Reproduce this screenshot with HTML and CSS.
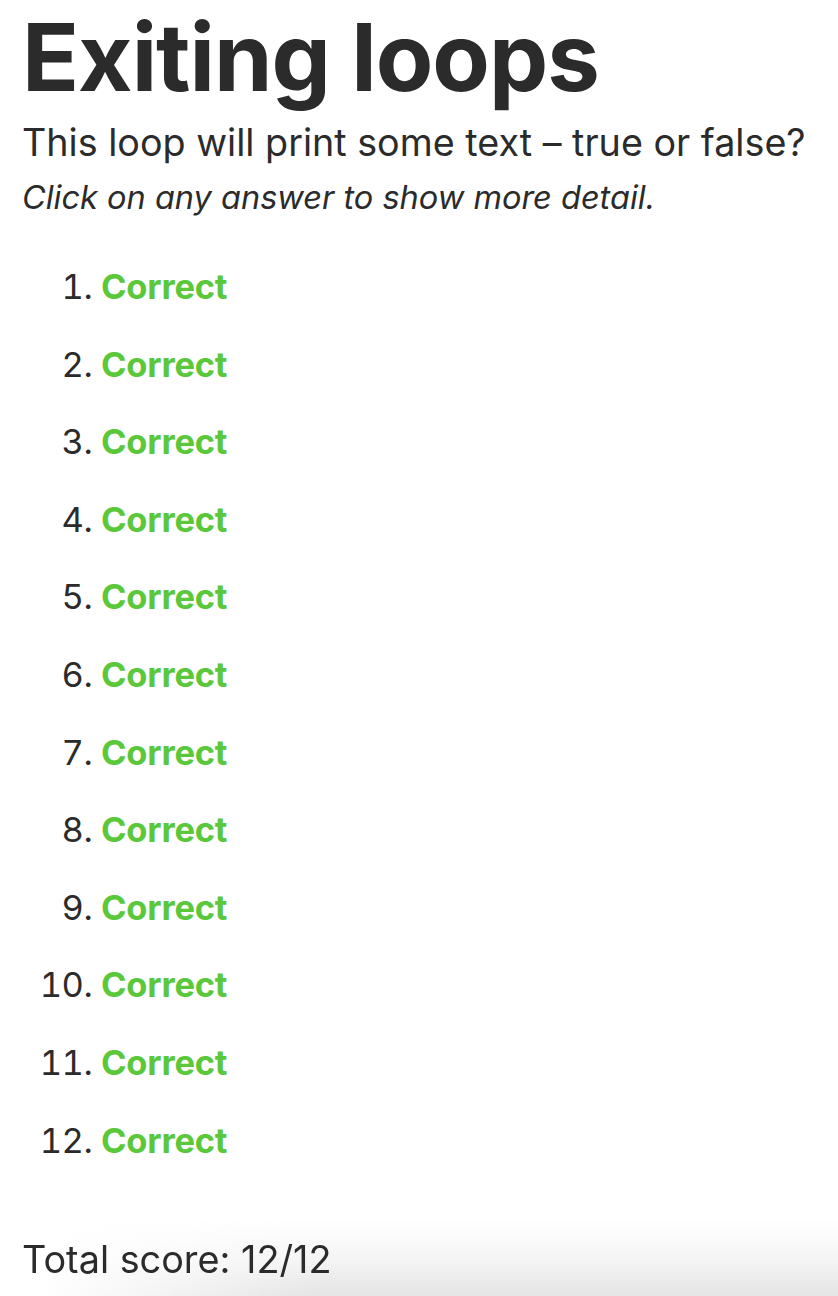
FILE: index.html
```html
<!DOCTYPE html>
<html>
<head>
<meta charset="utf-8">
<link rel="stylesheet" href="styles.css">
</head>
<body>
<main class="page">
  <h1 class="title">Exiting loops</h1>
  <p class="question">This loop will print some text – true or false?</p>
  <p class="hint">Click on any answer to show more detail.</p>
  <ol class="answers">
    <li><span class="correct">Correct</span></li>
    <li><span class="correct">Correct</span></li>
    <li><span class="correct">Correct</span></li>
    <li><span class="correct">Correct</span></li>
    <li><span class="correct">Correct</span></li>
    <li><span class="correct">Correct</span></li>
    <li><span class="correct">Correct</span></li>
    <li><span class="correct">Correct</span></li>
    <li><span class="correct">Correct</span></li>
    <li><span class="correct">Correct</span></li>
    <li><span class="correct">Correct</span></li>
    <li><span class="correct">Correct</span></li>
  </ol>
</main>
<footer class="score">
  <div class="score-bg"></div>
  <span class="score-text">Total score: 12/12</span>
</footer>
</body>
</html>
```
FILE: styles.css
```css
html, body {
  margin: 0;
  padding: 0;
  background: #fff;
}
body {
  font-family: Inter, "Noto Sans", sans-serif;
  color: #2b2b2b;
}
.page {
  padding: 0 22px 120px;
}
.title {
  font-size: 94px;
  font-weight: 700;
  line-height: 94px;
  margin: 10px 0 0;
  letter-spacing: -1px;
}
.question {
  font-size: 37.7px;
  margin: 15px 0 0;
  line-height: 46px;
}
.hint {
  font-size: 32.5px;
  font-style: italic;
  margin: 13px 0 0;
  line-height: 40px;
}
.answers {
  margin: 49px 0 0;
  padding-left: 79px;
  font-size: 34.5px;
}
.answers li {
  line-height: 40px;
  margin-bottom: 37.6px;
}
.answers li::marker {
  letter-spacing: -0.5px;
}
.correct {
  color: #5bc83c;
  font-weight: 700;
  letter-spacing: -0.2px;
}
.score {
  position: fixed;
  left: 0;
  right: 0;
  bottom: 0;
  height: 90px;
  padding: 0 22px 14px;
  box-sizing: border-box;
  display: flex;
  align-items: flex-end;
  font-size: 37.8px;
}
.score-bg {
  position: absolute;
  inset: 0;
  background: linear-gradient(to bottom, rgba(228,228,228,0) 0%, rgba(228,228,228,0) 15%, rgba(228,228,228,0.4) 60%, #e4e4e4 100%);
  -webkit-mask-image: linear-gradient(to right, transparent 40px, #000 320px);
  mask-image: linear-gradient(to right, transparent 40px, #000 320px);
}
.score-text {
  position: relative;
  line-height: 46px;
}
```
